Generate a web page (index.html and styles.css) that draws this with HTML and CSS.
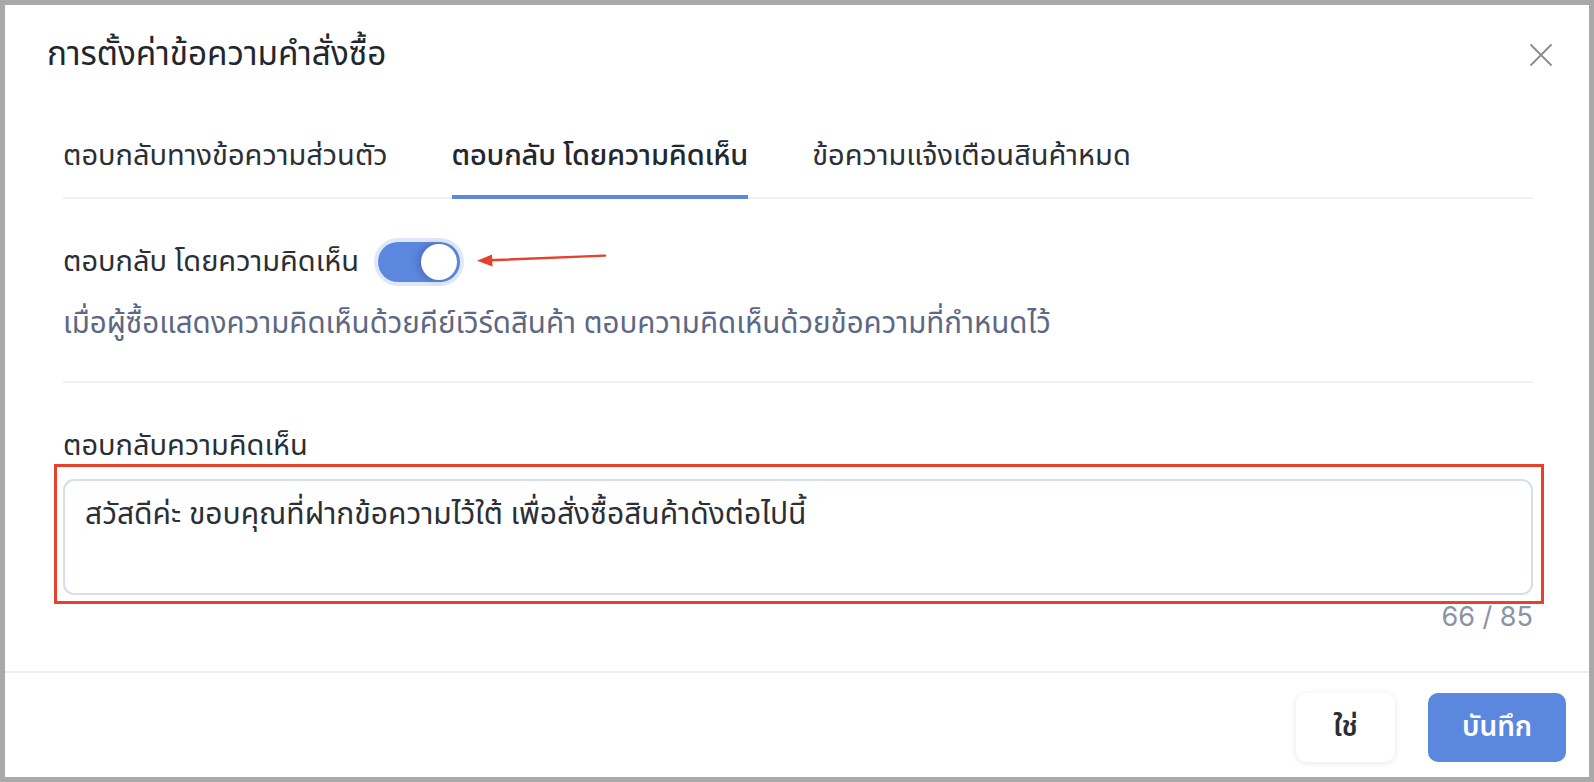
FILE: index.html
```html
<!DOCTYPE html>
<html lang="th">
<head>
<meta charset="utf-8">
<title>การตั้งค่าข้อความคำสั่งซื้อ</title>
<link rel="stylesheet" href="styles.css">
</head>
<body>
<div class="modal">
  <header class="modal-header">
    <h1 class="modal-title">การตั้งค่าข้อความคำสั่งซื้อ</h1>
    <button class="close-btn" aria-label="close">
      <svg width="24" height="24" viewBox="0 0 24 24"><path d="M1.5 1.5 L22.5 22.5 M22.5 1.5 L1.5 22.5" stroke="#8a8a8a" stroke-width="1.8" fill="none"/></svg>
    </button>
  </header>
  <div class="modal-body">
    <nav class="tabs">
      <div class="tab">ตอบกลับทางข้อความส่วนตัว</div>
      <div class="tab active">ตอบกลับ โดยความคิดเห็น</div>
      <div class="tab">ข้อความแจ้งเตือนสินค้าหมด</div>
    </nav>
    <div class="toggle-row">
      <span class="toggle-label">ตอบกลับ โดยความคิดเห็น</span>
      <span class="switch"><span class="knob"></span></span>
      <svg class="arrow" width="134" height="18" viewBox="0 0 134 18">
        <line x1="14" y1="9.3" x2="130" y2="4.6" stroke="#e5412d" stroke-width="2.4" stroke-linecap="round"/>
        <polygon points="2,9.8 17,3.6 17.5,15.4" fill="#e5412d"/>
      </svg>
    </div>
    <p class="desc">เมื่อผู้ซื้อแสดงความคิดเห็นด้วยคีย์เวิร์ดสินค้า ตอบความคิดเห็นด้วยข้อความที่กำหนดไว้</p>
    <hr class="divider">
    <label class="field-label">ตอบกลับความคิดเห็น</label>
    <div class="field">
      <div class="textarea">สวัสดีค่ะ ขอบคุณที่ฝากข้อความไว้ใต้ เพื่อสั่งซื้อสินค้าดังต่อไปนี้</div>
      <span class="highlight"></span>
    </div>
    <div class="counter">66 / 85</div>
  </div>
  <footer class="modal-footer">
    <button class="btn btn-default">ใช่</button>
    <button class="btn btn-primary">บันทึก</button>
  </footer>
</div>
</body>
</html>
```
FILE: styles.css
```css
* { box-sizing: border-box; }
html, body { margin: 0; padding: 0; }
body {
  width: 1594px;
  height: 782px;
  background: #a9a9a9;
  padding: 5px;
  font-family: "Noto Sans Thai", "Noto Sans", "Liberation Sans", sans-serif;
  color: #2a2e35;
  overflow: hidden;
}
.modal {
  background: #ffffff;
  height: 772px;
  display: flex;
  flex-direction: column;
}
.modal-header {
  display: flex;
  align-items: flex-start;
  justify-content: space-between;
  padding: 30px 36px 0 42px;
}
.modal-title {
  margin: 0;
  font-size: 33.3px;
  font-weight: 400;
  line-height: 40px;
  color: #22262d;
}
.close-btn {
  border: 0;
  background: none;
  padding: 0;
  margin-top: 8px;
  width: 24px;
  height: 24px;
  cursor: pointer;
}
.modal-body {
  flex: 1;
  padding: 63px 56px 0 58px;
}
.tabs {
  display: flex;
  gap: 64px;
  border-bottom: 2px solid #efefef;
}
.tab {
  font-size: 29px;
  line-height: 36px;
  padding-bottom: 23px;
  color: #2b2f36;
  position: relative;
}
.tab.active {
  font-weight: 500;
  letter-spacing: -0.2px;
  color: #23272e;
}
.tab.active::after {
  content: "";
  position: absolute;
  left: 0;
  right: 0;
  bottom: -2px;
  height: 4px;
  background: #5b87df;
}
.toggle-row {
  display: flex;
  align-items: center;
  margin-top: 39px;
  height: 48px;
}
.toggle-label {
  font-size: 29px;
  line-height: 36px;
  color: #2b2f36;
}
.switch {
  position: relative;
  width: 82px;
  height: 40px;
  border-radius: 20px;
  background: #5b87df;
  margin-left: 19px;
  box-shadow: 0 0 0 4px #dfe7f8;
}
.knob {
  position: absolute;
  right: 3px;
  top: 2px;
  width: 36px;
  height: 36px;
  border-radius: 50%;
  background: #fff;
  box-shadow: -3px 0 6px rgba(30, 50, 110, 0.3);
}
.arrow {
  margin-left: 15px;
  margin-top: -4px;
}
.desc {
  margin: 21px 0 0;
  font-size: 29.5px;
  line-height: 34px;
  color: #5c6884;
}
.divider {
  margin: 40px 0 0;
  border: 0;
  border-top: 2px solid #efefef;
}
.field-label {
  display: block;
  margin-top: 46px;
  font-size: 29px;
  line-height: 34px;
  color: #2b2f36;
}
.field {
  position: relative;
  margin-top: 16px;
}
.textarea {
  height: 116px;
  border: 2px solid #d6dee9;
  border-radius: 11px;
  padding: 17px 20px;
  font-size: 30px;
  line-height: 34px;
  color: #2b2f36;
}
.highlight {
  position: absolute;
  left: -9px;
  right: -11px;
  top: -15px;
  bottom: -9px;
  border: 3px solid #e5412d;
  pointer-events: none;
}
.counter {
  margin-top: 5px;
  text-align: right;
  font-family: "Inter", "Liberation Sans", sans-serif;
  font-size: 27px;
  line-height: 34px;
  color: #8a93a3;
}
.modal-footer {
  border-top: 2px solid #efefef;
  display: flex;
  justify-content: flex-end;
  gap: 33px;
  padding: 20px 23px 15px;
}
.btn {
  height: 69px;
  border-radius: 10px;
  border: 0;
  font-family: "Noto Sans Thai", "Noto Sans", sans-serif;
  font-size: 28px;
  font-weight: 600;
  cursor: pointer;
}
.btn-default {
  width: 99px;
  background: #fff;
  color: #2a2e35;
  box-shadow: 0 1px 6px rgba(0, 0, 0, 0.1);
}
.btn-primary {
  width: 138px;
  background: #5b87df;
  color: #fff;
}
```
